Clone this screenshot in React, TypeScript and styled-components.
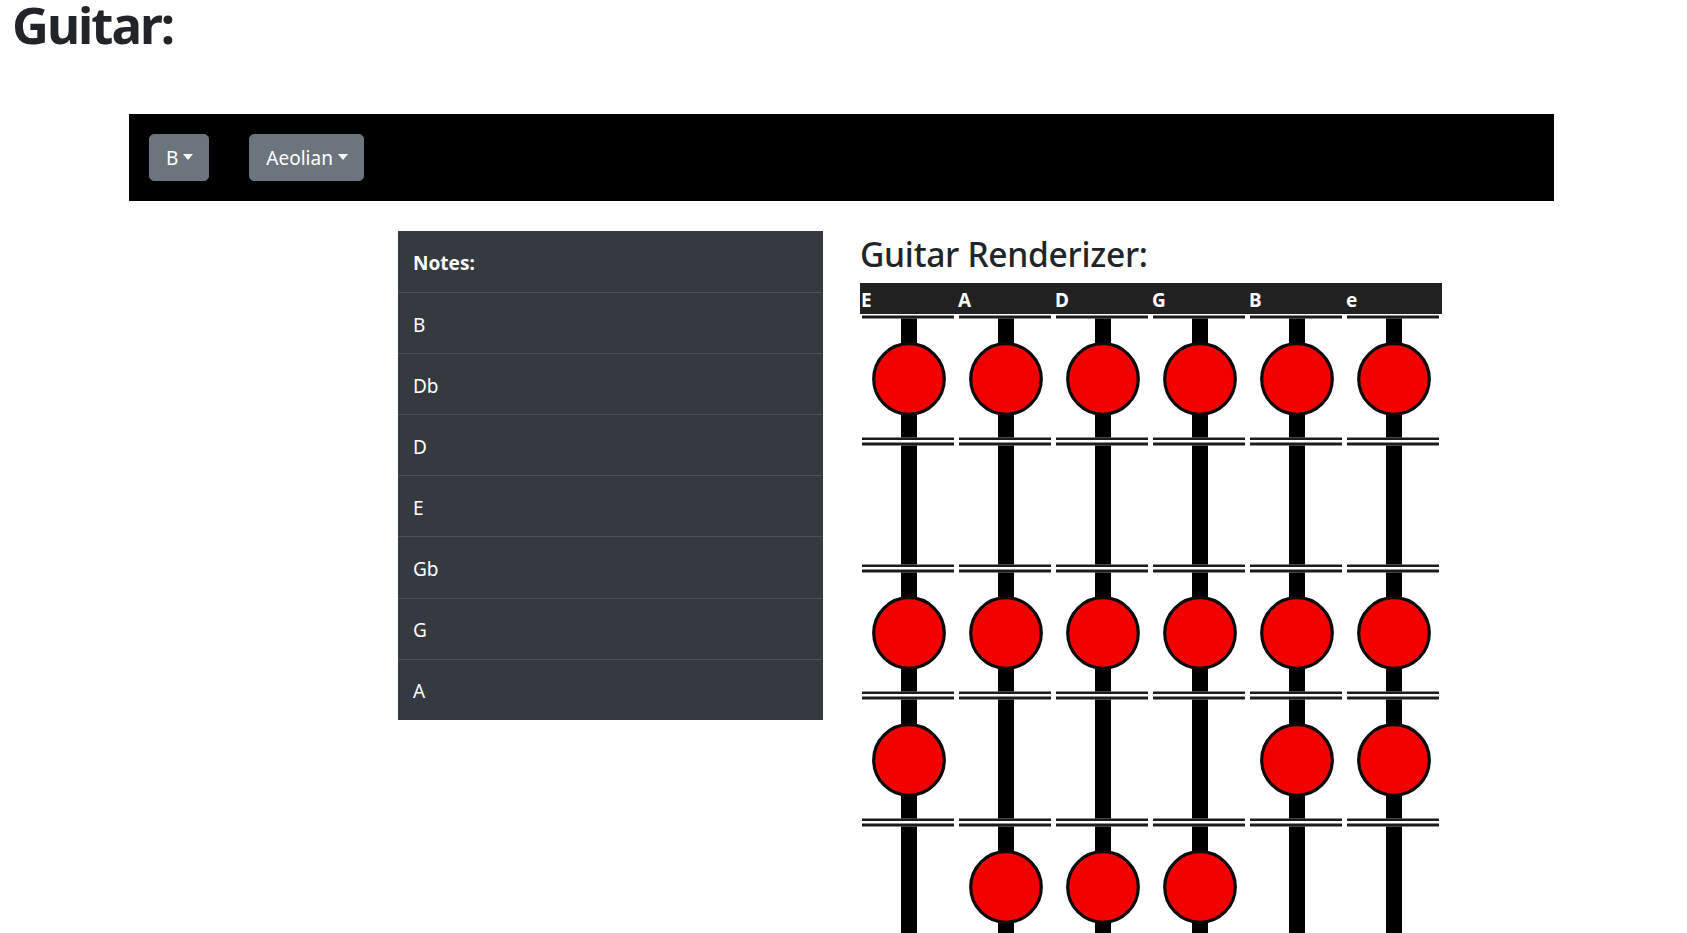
import React from "react";
import styled, { createGlobalStyle } from "styled-components";

const GlobalStyle = createGlobalStyle`
  html { scrollbar-width: none; }
  html::-webkit-scrollbar { display: none; }
  body {
    margin: 0;
    font-family: "Noto Sans", "Open Sans", sans-serif;
    color: #212529;
    background: #fff;
  }
`;

const PageTitle = styled.h1`
  margin: 0 0 0 12px;
  font-size: 51px;
  line-height: 48px;
  font-weight: 700;
  letter-spacing: -2px;
`;

const Container = styled.div`
  width: 1425px;
  margin: 66px 0 0 129px;
`;

const Toolbar = styled.nav`
  background: #000;
  padding: 20px;
  display: flex;
  gap: 40px;
  align-items: center;
`;

const DropButton = styled.button`
  height: 47px;
  padding: 0 15px 0 16px;
  border: 1px solid #6c757d;
  border-radius: 5px;
  background: #6c757d;
  color: #fff;
  font-family: inherit;
  font-size: 19px;
  line-height: 28px;
  display: flex;
  align-items: center;
  cursor: pointer;
`;

const Caret = styled.span`
  display: inline-block;
  margin-left: 5px;
  border-top: 6px solid #fff;
  border-left: 5.5px solid transparent;
  border-right: 5.5px solid transparent;
  transform: translateY(-1px);
`;

const Content = styled.div`
  display: flex;
  align-items: flex-start;
  gap: 37px;
  padding: 30px 0 0 269px;
`;

const NotesList = styled.ul`
  list-style: none;
  margin: 0;
  padding: 0;
  width: 425px;
  background: #343a40;
`;

const NoteItem = styled.li<{ $head?: boolean }>`
  box-sizing: border-box;
  height: 61.1px;
  padding: 3px 15px 0;
  display: flex;
  align-items: center;
  color: #fff;
  font-size: 19px;
  font-weight: ${(p) => (p.$head ? 700 : 400)};
  & + & {
    border-top: 1px solid rgba(255, 255, 255, 0.12);
  }
`;

const Renderer = styled.section`
  display: flex;
  flex-direction: column;
`;

const RendererTitle = styled.h3`
  margin: 3px 0 9px;
  font-size: 33.6px;
  line-height: 1.2;
  font-weight: 500;
  letter-spacing: -0.3px;
`;

const Board = styled.div`
  width: 582px;
  display: flex;
  flex-direction: column;
`;

const StringHeader = styled.div`
  display: flex;
  height: 31px;
  box-sizing: border-box;
  padding-top: 4px;
  background: #212121;
`;

const StringLabel = styled.span`
  width: 97px;
  padding-left: 1px;
  color: #fff;
  font-weight: 700;
  font-size: 19px;
  line-height: 26px;
`;

const FretRow = styled.div`
  display: flex;
  gap: 5px;
  padding-left: 2px;
  height: 127px;
`;

const CellSvg = styled.svg`
  display: block;
  width: 92px;
  height: 127px;
  flex: none;
`;

const FretCell: React.FC<{ dot: boolean }> = ({ dot }) => (
  <CellSvg viewBox="0 0 92 127">
    <rect x="0" y="1.5" width="92" height="3" fill="#1c1c1c" />
    <rect x="0" y="123.5" width="92" height="2.5" fill="#1c1c1c" />
    <rect x="39" y="4.5" width="16" height="119" fill="#000" />
    {dot && (
      <circle cx="47" cy="65" r="35.3" fill="#f20000" stroke="#0a0a0a" strokeWidth="3.2" />
    )}
  </CellSvg>
);

const NOTE_NAMES = ["C", "Db", "D", "Eb", "E", "F", "Gb", "G", "Ab", "A", "Bb", "B"];
const SCALE = ["B", "Db", "D", "E", "Gb", "G", "A"];
const STRINGS: { label: string; base: number }[] = [
  { label: "E", base: 4 },
  { label: "A", base: 9 },
  { label: "D", base: 2 },
  { label: "G", base: 7 },
  { label: "B", base: 11 },
  { label: "e", base: 4 },
];
const FRETS = Array.from({ length: 13 }, (_, i) => i);

export default function App() {
  return (
    <>
      <GlobalStyle />
      <PageTitle>Guitar:</PageTitle>
      <Container>
        <Toolbar>
          <DropButton>
            B<Caret />
          </DropButton>
          <DropButton>
            Aeolian<Caret />
          </DropButton>
        </Toolbar>
        <Content>
          <NotesList>
            <NoteItem $head>Notes:</NoteItem>
            {SCALE.map((n) => (
              <NoteItem key={n}>{n}</NoteItem>
            ))}
          </NotesList>
          <Renderer>
            <RendererTitle>Guitar Renderizer:</RendererTitle>
            <Board>
              <StringHeader>
                {STRINGS.map((s, i) => (
                  <StringLabel key={i}>{s.label}</StringLabel>
                ))}
              </StringHeader>
              {FRETS.map((f) => (
                <FretRow key={f}>
                  {STRINGS.map((s, i) => (
                    <FretCell key={i} dot={SCALE.includes(NOTE_NAMES[(s.base + f) % 12])} />
                  ))}
                </FretRow>
              ))}
            </Board>
          </Renderer>
        </Content>
      </Container>
    </>
  );
}
